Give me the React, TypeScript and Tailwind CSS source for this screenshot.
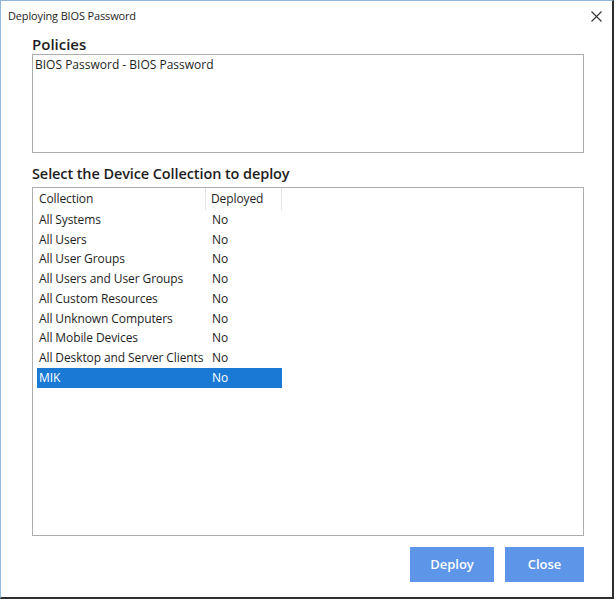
import { useState } from 'react'

const rows = [
  'All Systems',
  'All Users',
  'All User Groups',
  'All Users and User Groups',
  'All Custom Resources',
  'All Unknown Computers',
  'All Mobile Devices',
  'All Desktop and Server Clients',
  'MIK',
]

export default function App() {
  const [selected, setSelected] = useState('MIK')

  return (
    <div className="w-[616px] h-[608px] bg-white font-['Open_Sans',sans-serif] text-[#1e1e1e]">
      {/* Window frame */}
      <div className="w-[614px] h-[599px] flex flex-col border border-[#8fb8dc] border-r-2 border-r-[#2e2e2e] border-b-2 border-b-[#2e2e2e]">
        {/* Title bar */}
        <div className="h-[33px] flex items-center justify-between pl-[7px] pr-[10px] pb-[2px]">
          <span className="text-[11px] tracking-[-0.15px]">Deploying BIOS Password</span>
          <svg width="11" height="11" viewBox="0 0 11 11" className="text-[#333]">
            <path d="M0.5 0.5 L10.5 10.5 M10.5 0.5 L0.5 10.5" stroke="currentColor" strokeWidth="1.1" fill="none" />
          </svg>
        </div>

        <div className="flex-1 flex flex-col pl-[31px] pr-[28px]">
          <div className="h-[20px] leading-[20px] text-[15px] font-semibold">Policies</div>
          <div className="h-[99px] border border-[#adadad] px-[2px] pt-[1px] text-[12px] leading-[18px]">
            BIOS Password - BIOS Password
          </div>

          <div className="mt-[11px] h-[20px] leading-[20px] text-[14.5px] font-semibold tracking-[-0.1px]">
            Select the Device Collection to deploy
          </div>
          <div className="mt-[3px] h-[349px] border border-[#adadad] pl-[4px] text-[12px] tracking-[-0.1px]">
            {/* Header */}
            <div className="flex h-[22px] items-center">
              <div className="w-[169px] h-full flex items-center pl-[2px] border-r border-[#e5e5e5]">Collection</div>
              <div className="w-[76px] h-full flex items-center pl-[5px] border-r border-[#e5e5e5]">Deployed</div>
            </div>
            {rows.map((r) => {
              const on = r === selected
              return (
                <div
                  key={r}
                  onClick={() => setSelected(r)}
                  className={`flex w-[245px] h-[19.75px] items-center ${on ? 'bg-[#1979d4] text-white' : ''}`}
                >
                  <div className="w-[169px] pl-[2px] whitespace-nowrap">{r}</div>
                  <div className="w-[76px] pl-[6px]">No</div>
                </div>
              )
            })}
          </div>

          <div className="flex justify-end gap-[11px] mt-[11px]">
            <button className="w-[84px] h-[35px] bg-[#5d95e8] text-white text-[13px] font-semibold">Deploy</button>
            <button className="w-[79px] h-[35px] bg-[#5d95e8] text-white text-[13px] font-semibold">Close</button>
          </div>
        </div>
      </div>
    </div>
  )
}
